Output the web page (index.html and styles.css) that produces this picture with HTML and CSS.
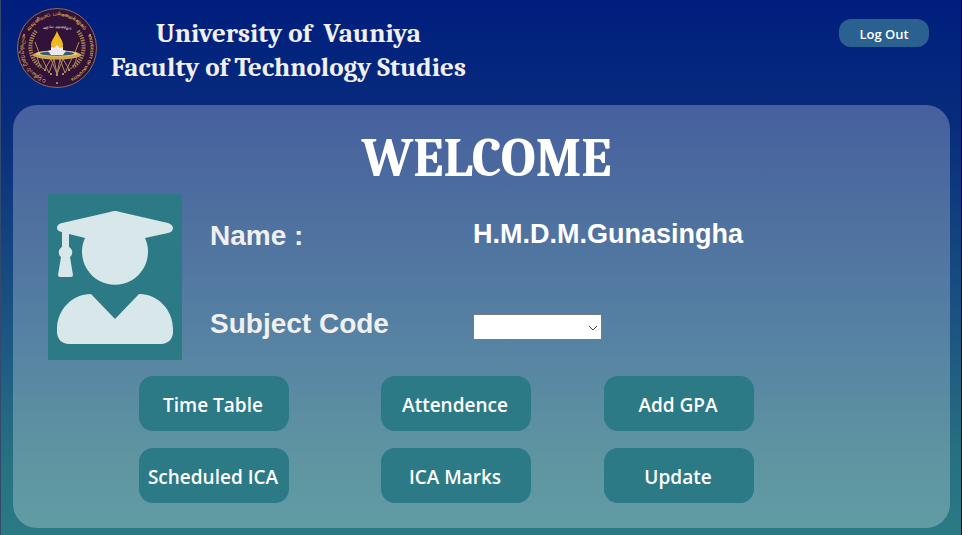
FILE: index.html
```html
<!DOCTYPE html>
<html lang="en">
<head>
<meta charset="utf-8">
<title>Student Dashboard</title>
<meta name="viewport" content="width=device-width, initial-scale=1">
<link rel="stylesheet" href="styles.css">
</head>
<body>
<header class="header">
  <svg class="crest" viewBox="0 0 80 80" role="img" aria-label="University crest">
    <defs>
      <path id="ring-top" d="M7.500 40a32.500 32.500 0 0 1 65 0"/>
      <path id="ring-inner" d="M16 24q24-8 48 0"/>
      <path id="ring-right" d="M40 6.500a33.500 33.500 0 0 1 0 67"/>
      <path id="ring-left" d="M40 73.500a33.500 33.500 0 0 1 0 -67"/>
    </defs>
    <circle cx="40" cy="40" r="39.500" fill="#31133a" stroke="#8c6b60"/>
    <g class="crest-text">
      <text font-size="5"><textPath href="#ring-top" startOffset="50%" text-anchor="middle">வவுனியாப் பல்கலைக்கழகம்</textPath></text>
      <text font-size="3" class="crest-pale"><textPath href="#ring-inner" startOffset="50%" text-anchor="middle">அறிவே அனைத்தும்</textPath></text>
      <text font-size="4"><textPath href="#ring-right" startOffset="62%" text-anchor="middle">UNIVERSITY OF VAVUNIYA</textPath></text>
      <text font-size="5"><textPath href="#ring-left" startOffset="36%" text-anchor="middle">වවුනියාව විශ්වවිද්‍යාලය</textPath></text>
    </g>
    <g fill="none" stroke="#a9804d" stroke-width="4" stroke-dasharray="1.500 1">
      <path d="M19 23C10 34 12 51 24 59"/>
      <path d="M61 23C70 34 68 51 56 59"/>
    </g>
    <g fill="none" stroke="#b08a58" stroke-width="1">
      <path d="M18 34l5 13M62 34l-5 13M20 48q2 11 7 13M60 48q-2 11-7 13M25 50l7 15 5-14 3 15 3-15 5 14 7-15M28 61l6-10 6 15 6-15 6 10"/>
    </g>
    <g fill="#d4b47c"><circle cx="28" cy="62" r="1"/><circle cx="34" cy="66" r="1"/><circle cx="40" cy="67" r="1"/><circle cx="46" cy="66" r="1"/><circle cx="52" cy="62" r="1"/></g>
    <ellipse cx="40" cy="47" rx="24" ry="4.500" fill="#d2a74d"/>
    <ellipse cx="40" cy="45.500" rx="21" ry="3" fill="#e0c98d"/>
    <ellipse cx="40" cy="45.500" rx="17" ry="2.200" fill="#315b68"/>
    <path d="M40 23c2 6 6 9 6 14 0 3-2 6-4 7h-4c-2-1-4-4-4-7 0-5 4-8 6-14z" fill="#f0b91e"/>
    <path d="M40 37l3 3 3-1 0 3 3 1-3 4H34l-3-4 3-1 0-3 3 1z" fill="#ece9ee"/>
    <g fill="#cfa258"><circle cx="7" cy="27" r="1"/><circle cx="73" cy="27" r="1"/><circle cx="40" cy="75" r="1"/></g>
  </svg>
  <h1 class="title">University of &nbsp;Vauniya<br>Faculty of Technology Studies</h1>
  <button class="logout" type="button">Log Out</button>
</header>
<main class="panel">
  <h2 class="welcome">WELCOME</h2>
  <section class="profile">
    <div class="portrait">
      <svg viewBox="0 0 134 166" role="img" aria-label="Student portrait">
        <g fill="#d8e7e9">
          <path d="M62 18q5-2 10 0l48 11q5 2 5 5 0 4-5 5l-23 5a33 33 0 1 1-60 0l-16-4v13a6 6 0 0 1 1 10l3 18q0 2-2 2H12q-2 0-2-2l3-18a6 6 0 0 1 1-10V38q-5-1-5-4 0-4 5-5z"/>
          <path d="M43 100l24 25 24-25c19 0 34 16 34 35v3c0 7-5 12-12 12H21c-7 0-12-5-12-12v-3c0-19 15-35 34-35z"/>
        </g>
      </svg>
    </div>
    <div class="details">
      <span class="label">Name :</span>
      <span class="name">H.M.D.M.Gunasingha</span>
      <label class="label" for="subject">Subject Code</label>
      <div class="select-box">
        <select id="subject"><option></option></select>
        <svg class="chevron" viewBox="0 0 10 6" aria-hidden="true"><path d="M1 1l4 4 4-4" fill="none" stroke="#444"/></svg>
      </div>
    </div>
  </section>
  <nav class="actions" aria-label="Student services">
    <button type="button">Time Table</button>
    <button type="button">Attendence</button>
    <button type="button">Add GPA</button>
    <button type="button">Scheduled ICA</button>
    <button type="button">ICA Marks</button>
    <button type="button">Update</button>
  </nav>
</main>
</body>
</html>
```
FILE: styles.css
```css
* { box-sizing: border-box; }

body {
  margin: 0;
  min-height: 100vh;
  padding: 8px 11px 7px 12px;
  border-left: 1px solid #34496b;
  border-right: 1px solid #050b18;
  background: linear-gradient(#001e7e, #082c7c 23%, #1d5983 65%, #277080 85%, #2a7a85);
  font-family: "Open Sans", "Noto Sans", sans-serif;
  color: #fff;
  display: flex;
  flex-direction: column;
}

.header {
  display: flex;
  align-items: flex-start;
  padding: 0 21px 0 4px;
  height: 97px;
}

.crest { width: 80px; height: 80px; flex: none; }
.crest-text { fill: #d9a84b; font-family: "Noto Sans", sans-serif; font-weight: 700; }
.crest-pale { fill: #d8c8c8; }

.title {
  margin: 9px 0 0 14px;
  font: 700 27px/34px Cambria, "Liberation Serif", serif;
  color: #f0f0f0;
  text-align: center;
}

.logout {
  margin: 11px 0 0 auto;
  width: 90px;
  height: 28px;
  padding: 2px 0 0;
  border: 0;
  border-radius: 12px;
  background: #2a6190;
  color: #fff;
  font: 600 13px/26px "Open Sans", "Noto Sans", sans-serif;
}

.panel {
  flex: 1;
  padding: 24px 35px 25px;
  border-radius: 24px;
  background: rgba(255, 255, 255, 0.26);
}

.welcome {
  margin: 0 0 5px 10px;
  font: 700 54px/60px Cambria, "Liberation Serif", serif;
  text-align: center;
}

.profile { display: flex; gap: 28px; }
.portrait { width: 134px; height: 166px; background: #2c7a85; flex: none; }
.portrait svg { display: block; }

.details {
  flex: 1;
  display: grid;
  grid-template-columns: 263px 1fr;
  grid-template-rows: 80px 1fr;
  align-items: start;
  font: 700 28px/32px "Liberation Sans", Arial, sans-serif;
}

.label { color: #f0f0f0; padding-top: 26px; }
.name { padding-top: 24px; font-size: 27px; }
label.label { padding-top: 34px; }

.select-box { position: relative; width: 129px; margin-top: 40px; }

.select-box select {
  display: block;
  width: 100%;
  height: 26px;
  border: 1px solid #7a7a7a;
  border-radius: 0;
  background: #fff;
  appearance: none;
}

.chevron { position: absolute; right: 4px; top: 11px; width: 10px; height: 6px; pointer-events: none; }

.actions {
  display: grid;
  grid-template-columns: 242px 223px 150px;
  row-gap: 17px;
  margin: 16px 0 0 91px;
}

.actions button {
  width: 150px;
  height: 55px;
  padding: 2px 2px 0 0;
  border: 0;
  border-radius: 14px;
  background: #2c7a85;
  color: #fff;
  font: 600 19px/24px "Open Sans", "Noto Sans", sans-serif;
  white-space: nowrap;
}
```
